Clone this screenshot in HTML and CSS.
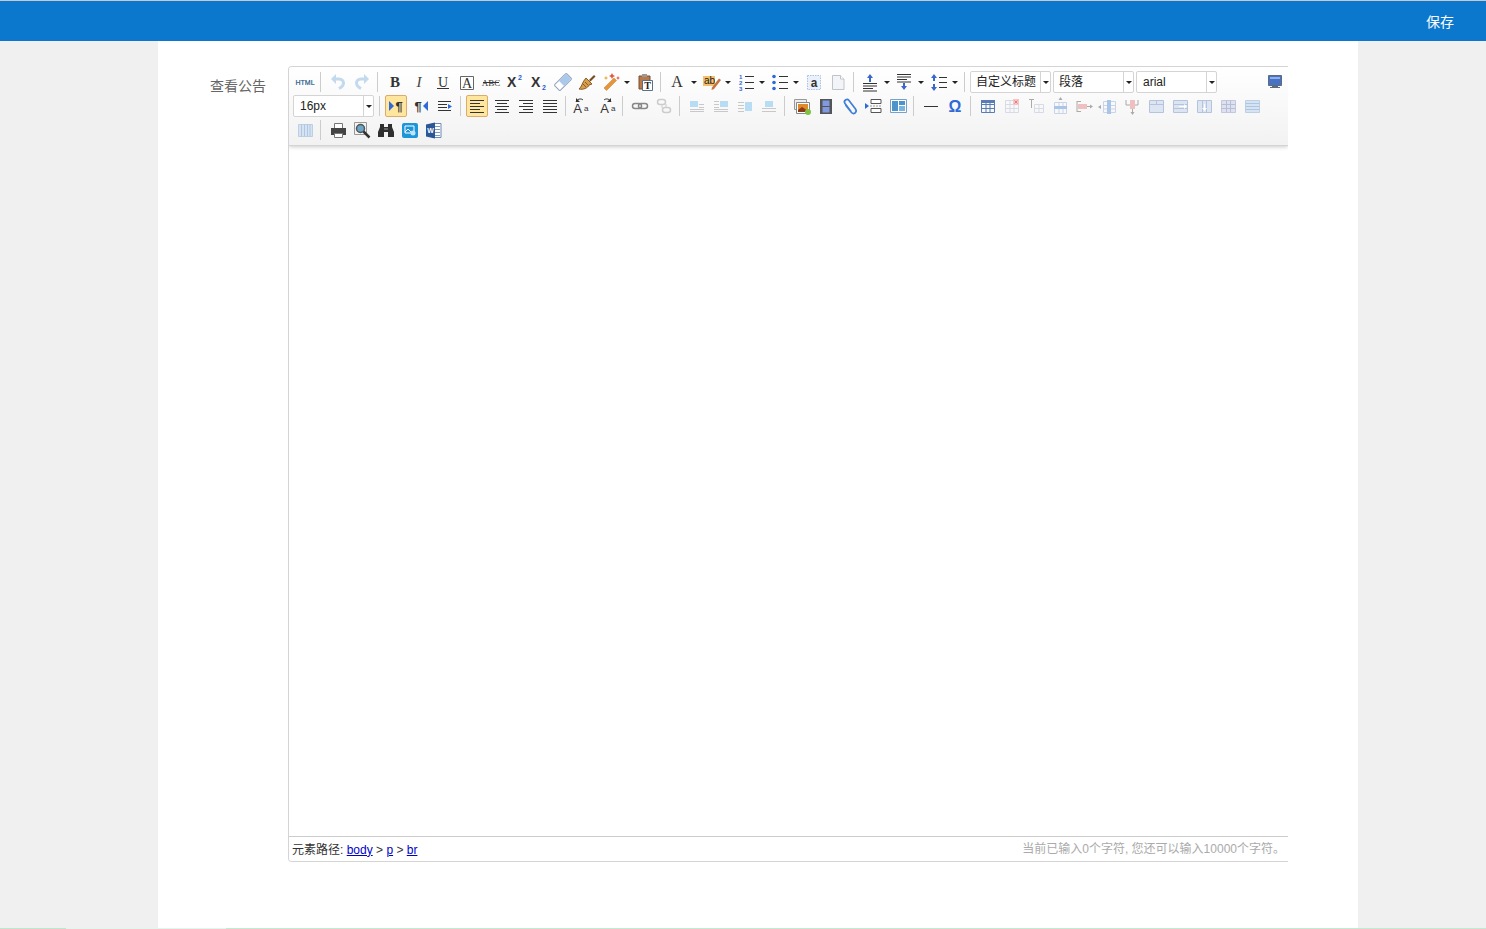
FILE: index.html
```html
<!DOCTYPE html>
<html lang="zh-CN">
<head>
  <meta charset="UTF-8" />
  <meta name="viewport" content="width=device-width, initial-scale=1" />
  <title>查看公告</title>
  <link rel="stylesheet" href="styles.css">
</head>
<body>
  <header class="topbar">
    <a class="save-link" href="#">保存</a>
  </header>

  <main class="page">
    <div class="form-row">
      <label class="form-label">查看公告</label>

      <div class="editor">
        <div class="toolbar">
          <!-- row 1 -->
          <div class="tool-row">
            <span class="btn"><svg width="20" height="20" viewBox="0 0 20 20"><text x="10" y="12.500" class="html-text">HTML</text></svg></span>
            <span class="sep"></span>
            <span class="btn"><svg width="20" height="20" viewBox="0 0 20 20"><path d="M7 7h4c3 0 4.500 2 4.500 4s-1.500 4-4.500 5.500" fill="none" stroke="#c3d9ee" stroke-width="3"/><path d="M8 2v10L3 7z" fill="#c3d9ee"/></svg></span>
            <span class="btn"><svg width="20" height="20" viewBox="0 0 20 20"><path d="M13 7H9c-3 0-4.500 2-4.500 4s1.500 4 4.500 5.500" fill="none" stroke="#c3d9ee" stroke-width="3"/><path d="M12 2v10l5-5z" fill="#c3d9ee"/></svg></span>
            <span class="sep"></span>
            <span class="btn"><svg width="20" height="20" viewBox="0 0 20 20"><text x="10" y="15" class="glyph-b">B</text></svg></span>
            <span class="btn"><svg width="20" height="20" viewBox="0 0 20 20"><text x="10" y="15" class="glyph-i">I</text></svg></span>
            <span class="btn"><svg width="20" height="20" viewBox="0 0 20 20"><text x="10" y="14.500" class="glyph-u">U</text><path d="M4 16.500h12" stroke="#333"/></svg></span>
            <span class="btn"><svg width="20" height="20" viewBox="0 0 20 20"><path d="M3.500 4.500h13v13h-13z" fill="#fff" stroke="#666"/><text x="10" y="15.500" class="glyph-u">A</text></svg></span>
            <span class="btn"><svg width="20" height="20" viewBox="0 0 20 20"><text x="10" y="14" class="abc-text">ABC</text><path d="M2 10.500h16" stroke="#333"/></svg></span>
            <span class="btn"><svg width="20" height="20" viewBox="0 0 20 20"><text x="2" y="15" class="glyph-x">X</text><text x="13" y="8" class="sup-text">2</text></svg></span>
            <span class="btn"><svg width="20" height="20" viewBox="0 0 20 20"><text x="2" y="15" class="glyph-x">X</text><text x="13" y="18" class="sup-text">2</text></svg></span>
            <span class="btn"><svg width="20" height="20" viewBox="0 0 20 20"><g transform="rotate(-45 10 10)"><rect x="1.500" y="6" width="17" height="8" rx="1" fill="#fff" stroke="#8fa3bd"/><rect x="8" y="6.500" width="10" height="7" fill="#a9c8ec"/></g></svg></span>
            <span class="btn"><svg width="20" height="20" viewBox="0 0 20 20"><path d="M12 8l5-5 1.500 1.500-5 5z" fill="#7a4a20"/><path d="M9 6l6 6-3 1c-1 3-6 5-10 4 3-2 3-7 7-11z" fill="#d79f4a" stroke="#8c5a2b"/><path d="M6 12l3 3M8 10l3 3" stroke="#8c5a2b"/></svg></span>
            <span class="btn split"><svg width="20" height="20" viewBox="0 0 20 20"><path d="M3 16L13 6l2.500 2.500-10 10z" fill="#e8953a" stroke="#c9702a" stroke-width=".5"/><path d="M11 1l1 2 2 1-2 1-1 2-1-2-2-1 2-1zM17 4l.7 1.500 1.300.5-1.300.5L17 8l-.7-1.500L15 6l1.300-.5z" fill="#e0573a"/><path d="M5 4l.7 1.300L7 6l-1.300.7L5 8l-.7-1.300L3 6l1.300-.7z" fill="#e9b13c"/></svg><i class="caret"></i></span>
            <span class="btn"><svg width="20" height="20" viewBox="0 0 20 20"><path d="M4 4h11v13H4z" fill="#b87a4b" stroke="#7a4f30"/><path d="M7 2h5v3H7z" fill="#999"/><path d="M7.500 8.500h10v10h-10z" fill="#fff" stroke="#5a6f8a"/><text x="12.500" y="17" class="paste-t">T</text></svg></span>
            <span class="sep"></span>
            <span class="btn split"><svg width="20" height="20" viewBox="0 0 20 20"><text x="9" y="14.500" class="glyph-a">A</text></svg><i class="caret"></i></span>
            <span class="btn split"><svg width="20" height="20" viewBox="0 0 20 20"><path d="M1 4h12v10H1z" fill="#f5bf6b"/><text x="2" y="12" class="ab-text">ab</text><path d="M10 15.500l7-9 2 1.500-7 9-2.500 1z" fill="#c9713c"/></svg><i class="caret"></i></span>
            <span class="btn split"><svg width="20" height="20" viewBox="0 0 20 20"><path d="M9 4.500h9M9 10.500h9M9 16.500h9" stroke="#333" stroke-width="1.200"/><text x="3" y="7" class="num-text">1</text><text x="3" y="13" class="num-text">2</text><text x="3" y="19" class="num-text">3</text></svg><i class="caret"></i></span>
            <span class="btn split"><svg width="20" height="20" viewBox="0 0 20 20"><path d="M9 4.500h9M9 10.500h9M9 16.500h9" stroke="#333" stroke-width="1.200"/><circle cx="4" cy="4.500" r="1.800" fill="#2f6ad6"/><circle cx="4" cy="10.500" r="1.800" fill="#2f6ad6"/><circle cx="4" cy="16.500" r="1.800" fill="#2f6ad6"/></svg><i class="caret"></i></span>
            <span class="btn"><svg width="20" height="20" viewBox="0 0 20 20"><path d="M3.500 3.500h13v14h-13z" fill="#eaf1fa" stroke="#a8c2e8" stroke-dasharray="1.500 1"/><text x="10" y="14.500" class="a-text">a</text></svg></span>
            <span class="btn"><svg width="20" height="20" viewBox="0 0 20 20"><path d="M4.500 3.500h8l3.500 3.500v10.500H4.500z" fill="#f2f4f8" stroke="#c0c4ca"/><path d="M12.500 3.500V7H16" fill="#fff" stroke="#c0c4ca"/></svg></span>
            <span class="sep"></span>
            <span class="btn split"><svg width="20" height="20" viewBox="0 0 20 20"><path d="M9 2l3 4h-2v4H8V6H6z" fill="#3a67c9"/><path d="M2 11.500h14M2 14h14M2 16.500h10M2 19h14" stroke="#333"/></svg><i class="caret"></i></span>
            <span class="btn split"><svg width="20" height="20" viewBox="0 0 20 20"><path d="M2 2.500h14M2 5h14M2 7.500h10M2 10h14" stroke="#333"/><path d="M9 18l3-4h-2v-3H8v3H6z" fill="#3a67c9"/></svg><i class="caret"></i></span>
            <span class="btn split"><svg width="20" height="20" viewBox="0 0 20 20"><path d="M5 2l3 4H6v3H4V6H2zM5 19l3-4H6v-3H4v3H2z" fill="#3a67c9"/><path d="M10 5.500h8M10 10.500h8M10 15.500h8" stroke="#333" stroke-width="1.200"/></svg><i class="caret"></i></span>
            <span class="sep"></span>
            <div class="select"><span class="select-value">自定义标题</span><span class="select-arrow"><i class="caret"></i></span></div>
            <div class="select"><span class="select-value">段落</span><span class="select-arrow"><i class="caret"></i></span></div>
            <div class="select latin"><span class="select-value">arial</span><span class="select-arrow"><i class="caret"></i></span></div>
            <span class="btn full"><svg width="20" height="20" viewBox="0 0 20 20"><path d="M3.500 3.500h13v10h-13z" fill="#4a72c4" stroke="#5d6b80"/><path d="M5 5h10v2H5z" fill="#8fb0e8"/><path d="M7 14h6v1h2v1H5v-1h2z" fill="#5d6b80"/></svg></span>
          </div>

          <!-- row 2 -->
          <div class="tool-row">
            <div class="select latin"><span class="select-value">16px</span><span class="select-arrow"><i class="caret"></i></span></div>
            <span class="sep"></span>
            <span class="btn"><span class="checked"><svg width="20" height="20" viewBox="0 0 20 20"><path d="M3 5l5 5-5 5z" fill="#2f6ad6"/><text x="13" y="15" class="pilcrow">¶</text></svg></span></span>
            <span class="btn"><svg width="20" height="20" viewBox="0 0 20 20"><path d="M17 5l-5 5 5 5z" fill="#2f6ad6"/><text x="7" y="15" class="pilcrow">¶</text></svg></span>
            <span class="btn"><svg width="20" height="20" viewBox="0 0 20 20"><path d="M3 5.500h13M3 8.500h9M3 11.500h9M3 14.500h13" stroke="#333"/><path d="M13 8l4 2.500-4 2.500z" fill="#2f6ad6"/></svg></span>
            <span class="sep"></span>
            <span class="btn"><span class="checked"><svg width="20" height="20" viewBox="0 0 20 20"><path d="M3 4.500h14M3 7.500h10M3 10.500h14M3 13.500h10M3 16.500h14" stroke="#333"/></svg></span></span>
            <span class="btn"><svg width="20" height="20" viewBox="0 0 20 20"><path d="M3 4.500h14M5 7.500h10M3 10.500h14M5 13.500h10M3 16.500h14" stroke="#333"/></svg></span>
            <span class="btn"><svg width="20" height="20" viewBox="0 0 20 20"><path d="M3 4.500h14M7 7.500h10M3 10.500h14M7 13.500h10M3 16.500h14" stroke="#333"/></svg></span>
            <span class="btn"><svg width="20" height="20" viewBox="0 0 20 20"><path d="M3 4.500h14M3 7.500h14M3 10.500h14M3 13.500h14M3 16.500h14" stroke="#333"/></svg></span>
            <span class="sep"></span>
            <span class="btn"><svg class="nudge" width="20" height="20" viewBox="0 0 20 20"><text x="7.500" y="17" class="case-a">A</text><text x="14" y="15" class="tiny-a">a</text><path d="M6 6c1-3 5-4 7-2" fill="none" stroke="#333"/><path d="M6 2v4h4z" fill="#333"/></svg></span>
            <span class="btn"><svg width="20" height="20" viewBox="0 0 20 20"><text x="7.500" y="17" class="case-a">A</text><text x="14" y="15" class="tiny-a">a</text><path d="M14 6c-1-3-5-4-7-2" fill="none" stroke="#333"/><path d="M14 2v4h-4z" fill="#333"/></svg></span>
            <span class="sep"></span>
            <span class="btn"><svg width="20" height="20" viewBox="0 0 20 20"><rect x="2.500" y="7.500" width="9" height="5" rx="2.500" fill="none" stroke="#888" stroke-width="1.500"/><rect x="8.500" y="7.500" width="9" height="5" rx="2.500" fill="none" stroke="#888" stroke-width="1.500"/></svg></span>
            <span class="btn"><svg width="20" height="20" viewBox="0 0 20 20"><rect x="3.500" y="3.500" width="8" height="5" rx="2.500" fill="none" stroke="#ccc" stroke-width="1.500"/><rect x="8.500" y="11.500" width="8" height="5" rx="2.500" fill="none" stroke="#ccc" stroke-width="1.500"/><path d="M8 8v4M12 8v4" stroke="#ccc"/></svg></span>
            <span class="sep"></span>
            <span class="btn"><svg width="20" height="20" viewBox="0 0 20 20"><path d="M3 5h8v6H3z" fill="#b9dcf5"/><path d="M12 8.500h5M12 11.500h5M3 13.500h14M3 15.500h14" stroke="#c8c8c8"/></svg></span>
            <span class="btn"><svg width="20" height="20" viewBox="0 0 20 20"><path d="M9 5h8v6H9z" fill="#b9dcf5"/><path d="M3 5.500h5M3 8.500h5M3 11.500h5M3 13.500h14M3 15.500h14" stroke="#c8c8c8"/></svg></span>
            <span class="btn"><svg width="20" height="20" viewBox="0 0 20 20"><path d="M10 6h7v9h-7z" fill="#b9dcf5"/><path d="M3 6.500h6M3 9.500h6M3 12.500h6M3 15.500h6" stroke="#c8c8c8"/></svg></span>
            <span class="btn"><svg width="20" height="20" viewBox="0 0 20 20"><path d="M6 5h8v6H6z" fill="#b9dcf5"/><path d="M3 12.500h14M3 15.500h14" stroke="#c8c8c8"/></svg></span>
            <span class="sep"></span>
            <span class="btn"><svg width="20" height="20" viewBox="0 0 20 20"><path d="M2.500 3.500h12v10h-12z" fill="#eee" stroke="#999"/><path d="M4.500 6.500h13v11h-13z" fill="#fff" stroke="#888"/><path d="M6 8h10v8H6z" fill="#e08a2a"/><path d="M6 14l4-3 6 4v1H6z" fill="#8a3a1a"/><circle cx="16" cy="16" r="3" fill="#7fc241"/></svg></span>
            <span class="btn"><svg width="20" height="20" viewBox="0 0 20 20"><path d="M4 3h12v15H4z" fill="#555"/><path d="M6.500 4.500h7v5.500h-7zM6.500 11h7v5.500h-7z" fill="#7f9ae0"/></svg></span>
            <span class="btn"><svg width="20" height="20" viewBox="0 0 20 20"><path d="M5.500 9l6 7.500c2.500 2.500 6-.5 4-3.500L9 4.500C7 2 3 4.500 5 7.500l6 8" fill="none" stroke="#3f7fd6" stroke-width="1.700"/></svg></span>
            <span class="btn"><svg width="20" height="20" viewBox="0 0 20 20"><path d="M7 3.500h10v4H7zM7 12.500h10v4H7z" fill="#fff" stroke="#555"/><path d="M6 10h12" stroke="#999" stroke-dasharray="2 1"/><path d="M1 7l4 3-4 3z" fill="#2f6ad6"/></svg></span>
            <span class="btn"><svg width="20" height="20" viewBox="0 0 20 20"><path d="M2.500 3.500h16v13h-16z" fill="#fff" stroke="#7aa0c4"/><path d="M4 5h6v10H4z" fill="#4d93cc"/><path d="M11 5h6v4h-6z" fill="#4d93cc"/><path d="M11 10h6v5h-6z" fill="#7ab4df"/></svg></span>
            <span class="sep"></span>
            <span class="btn"><svg width="20" height="20" viewBox="0 0 20 20"><path d="M3 10.500h14" stroke="#333"/></svg></span>
            <span class="btn"><svg width="20" height="20" viewBox="0 0 20 20"><text x="10" y="16" class="omega">Ω</text></svg></span>
            <span class="sep"></span>
            <span class="btn"><svg width="20" height="20" viewBox="0 0 20 20"><path d="M3 4h14v3H3z" fill="#5a7cb5"/><path d="M3.500 4.500h13v12h-13zM3.500 8.500h13M3.500 12.500h13M8 7v10M12 7v10" fill="none" stroke="#5a7cb5"/></svg></span>
            <span class="btn"><svg width="20" height="20" viewBox="0 0 20 20"><path d="M3.500 4.500h13v12h-13zM3.500 8.500h13M3.500 12.500h13M8 4v13M12 4v13" fill="none" stroke="#d6dbe5"/><path d="M11 3h6v6h-6z" fill="#f7c5c5"/><path d="M12.500 4.500l3 3M15.500 4.500l-3 3" stroke="#e58080"/></svg></span>
            <span class="btn"><svg width="20" height="20" viewBox="0 0 20 20"><path d="M8.500 8.500h9v8h-9zM8.500 12.500h9M13 8v9" fill="none" stroke="#d6dbe5"/><path d="M3 3.500h5M5.500 3v9" stroke="#aaa"/></svg></span>
            <span class="btn"><svg width="20" height="20" viewBox="0 0 20 20"><path d="M4.500 6.500h12v11h-12zM9 6v12M13 6v12" fill="none" stroke="#c9d4e6"/><path d="M4 10h13v3H4z" fill="#a9c6ea"/><path d="M10.500 1l2 3h-4z" fill="#aaa"/></svg></span>
            <span class="btn"><svg width="20" height="20" viewBox="0 0 20 20"><path d="M3 5.500h4M3 15.500h4M3 5v11" fill="none" stroke="#aaa"/><path d="M4 8h9v5H4z" fill="#f0c0c0"/><path d="M13 10.500h4" stroke="#aaa"/><path d="M16 8.500l3 2-3 2z" fill="#aaa"/></svg></span>
            <span class="btn"><svg width="20" height="20" viewBox="0 0 20 20"><path d="M5.500 5.500h12v11h-12zM5.500 9.500h12M5.500 13h12" fill="none" stroke="#c9d4e6"/><path d="M9 4h4v14H9z" fill="#a9c6ea"/><path d="M0 11l3-2v4z" fill="#aaa"/></svg></span>
            <span class="btn"><svg width="20" height="20" viewBox="0 0 20 20"><path d="M4 4v5h12V4" fill="none" stroke="#aaa"/><path d="M8 4h5v9H8z" fill="#f0c0c0"/><path d="M10.500 13v4" stroke="#aaa"/><path d="M8.500 16l2 3 2-3z" fill="#aaa"/></svg></span>
            <span class="btn"><svg width="20" height="20" viewBox="0 0 20 20"><path d="M3.500 4.500h14v12h-14z" fill="#dde5f2" stroke="#b5c4dc"/><path d="M3.500 8.500h14M10.500 4.500v4" stroke="#b5c4dc"/></svg></span>
            <span class="btn"><svg width="20" height="20" viewBox="0 0 20 20"><path d="M3.500 4.500h14v12h-14z" fill="#dde5f2" stroke="#b5c4dc"/><path d="M3.500 8.500h14M3.500 12.500h14" stroke="#b5c4dc"/><path d="M9 10.500h6" stroke="#fff"/><path d="M14 8l3 2.500-3 2.500z" fill="#fff"/></svg></span>
            <span class="btn"><svg width="20" height="20" viewBox="0 0 20 20"><path d="M3.500 4.500h14v12h-14z" fill="#dde5f2" stroke="#b5c4dc"/><path d="M8.500 4.500v12M12.500 4.500v12" stroke="#b5c4dc"/><path d="M10.500 8v5" stroke="#fff"/><path d="M8 12l2.500 3 2.500-3z" fill="#fff"/></svg></span>
            <span class="btn"><svg width="20" height="20" viewBox="0 0 20 20"><path d="M3.500 4.500h14v12h-14z" fill="#dde1f0" stroke="#c3c8dc"/><path d="M3.500 8.500h14M3.500 12.500h14M8.500 4.500v12M12.500 4.500v12" stroke="#b9bed6"/></svg></span>
            <span class="btn"><svg width="20" height="20" viewBox="0 0 20 20"><path d="M3.500 4.500h14v12h-14z" fill="#d5e3f3" stroke="#bccfe4"/><path d="M3.500 7.500h14M3.500 10.500h14M3.500 13.500h14" stroke="#aec6e0"/></svg></span>
          </div>

          <!-- row 3 -->
          <div class="tool-row">
            <span class="btn"><svg width="20" height="20" viewBox="0 0 20 20"><path d="M3.500 4.500h14v12h-14z" fill="#d5e3f3" stroke="#bccfe4"/><path d="M6.500 4.500v12M9.500 4.500v12M12.500 4.500v12M15 4.500v12" stroke="#aec6e0"/></svg></span>
            <span class="sep"></span>
            <span class="btn"><svg width="20" height="20" viewBox="0 0 20 20"><path d="M6.500 3.500h8v5h-8z" fill="#fff" stroke="#777"/><path d="M3 8h15v7H3z" fill="#444"/><path d="M6.500 13.500h8v4h-8z" fill="#fff" stroke="#777"/></svg></span>
            <span class="btn"><svg width="20" height="20" viewBox="0 0 20 20"><path d="M2.500 2.500h12v12h-12z" fill="#f4f4f4" stroke="#999"/><circle cx="8.500" cy="8.500" r="4" fill="#6aa7c9" stroke="#555" stroke-width="1.500"/><path d="M11.500 11.500l6 6" stroke="#333" stroke-width="2.500"/></svg></span>
            <span class="btn"><svg width="20" height="20" viewBox="0 0 20 20"><path d="M4 4h4v3h4V4h4v3l2 5v5h-6v-5H8v5H2v-5l2-5z" fill="#2f2f2f"/><path d="M8 8h4v2H8z" fill="#666"/></svg></span>
            <span class="btn"><svg width="20" height="20" viewBox="0 0 20 20"><rect x="2" y="3" width="16" height="15" rx="2" fill="#1d95d9"/><path d="M5 6h9v7H5z" fill="none" stroke="#fff"/><circle cx="13" cy="13" r="2.500" fill="#bfe4f8"/><path d="M5 12l3-3 3 3" fill="none" stroke="#fff"/></svg></span>
            <span class="btn"><svg width="20" height="20" viewBox="0 0 20 20"><path d="M8 3.500h9v14H8z" fill="#fff" stroke="#6f8ab5"/><path d="M10 6.500h6M10 9.500h6M10 12.500h6M10 15.500h6" stroke="#7f9ac4"/><path d="M2 4.500l9-2v16l-9-2z" fill="#2b5797"/><text x="6.500" y="13" class="word-w">W</text></svg></span>
          </div>
        </div>

        <div class="edit-area"></div>

        <div class="statusbar">
          <div class="path">元素路径: <a href="#">body</a> &gt; <a href="#">p</a> &gt; <a href="#">br</a></div>
          <div class="count">当前已输入0个字符, 您还可以输入10000个字符。</div>
        </div>
      </div>
    </div>
  </main>

  <div class="progress-line"></div>
</body>
</html>
```

FILE: styles.css
```css
* {
  box-sizing: border-box;
}

html, body {
  height: 100%;
}

body {
  margin: 0;
  background: #f0f0f0;
  font-family: "Liberation Sans", "Noto Sans CJK SC", sans-serif;
  font-size: 12px;
  color: #333;
  overflow: hidden;
  display: flex;
  flex-direction: column;
}

.topbar {
  height: 41px;
  flex-shrink: 0;
  background: #0b78cd;
  border-top: 1px solid #c9c9c9;
  display: flex;
  justify-content: flex-end;
  align-items: center;
  padding-right: 32px;
}

.save-link {
  color: #fff;
  font-size: 14px;
  text-decoration: none;
}

.page {
  width: 1200px;
  margin-left: 158px;
  flex: 1;
  background: #fff;
  padding-top: 25px;
}

.form-row {
  display: flex;
  align-items: flex-start;
}

.form-label {
  width: 108px;
  margin-top: 10px;
  text-align: right;
  font-size: 14px;
  line-height: 20px;
  color: #666;
}

.editor {
  width: 1000px;
  margin-left: 22px;
  border: 1px solid #d4d4d4;
  border-right: 0;
  border-radius: 4px 0 0 4px;
  overflow: hidden;
}

/* toolbar */
.toolbar {
  height: 79px;
  padding: 3px 0 0 4px;
  background: linear-gradient(to bottom, #fff, #f2f2f2);
  border-bottom: 1px solid #d4d4d4;
  box-shadow: 0 1px 4px #ccc;
  position: relative;
}

.tool-row {
  display: flex;
  height: 24px;
  align-items: center;
}

.btn {
  flex: none;
  width: 24px;
  height: 24px;
  display: flex;
  align-items: center;
  justify-content: center;
  position: relative;
}

.btn.split {
  width: 34px;
  justify-content: flex-start;
  padding-left: 2px;
}

.btn.split .caret {
  margin-left: 3px;
}

.btn.full {
  margin-left: 44px;
}

.caret {
  display: block;
  width: 0;
  height: 0;
  border-left: 3px solid transparent;
  border-right: 3px solid transparent;
  border-top: 3px solid #222;
}

.sep {
  flex: none;
  width: 9px;
  height: 20px;
  position: relative;
}

.sep::before {
  content: "";
  position: absolute;
  left: 3px;
  top: 0;
  width: 1px;
  height: 20px;
  background: #ccc;
}

.btn:has(.checked) {
  justify-content: flex-start;
}

.checked {
  width: 22px;
  height: 22px;
  flex: none;
  display: flex;
  align-items: center;
  justify-content: center;
  background: #ffe69f;
  border: 1px solid #dcac6c;
  border-radius: 2px;
}

.nudge {
  margin-left: -6px;
}

.select {
  flex: none;
  width: 81px;
  height: 22px;
  margin-right: 2px;
  display: flex;
  background: #fff;
  border: 1px solid #d4d4d4;
  border-radius: 2px;
  line-height: 20px;
  color: #222;
}

.select-value {
  flex: 1;
  padding-left: 5px;
  overflow: hidden;
  white-space: nowrap;
}

.select.latin .select-value {
  padding-left: 6px;
}

.select-arrow {
  width: 10px;
  border-left: 1px solid #d4d4d4;
  display: flex;
  align-items: center;
  justify-content: center;
}

/* svg text glyphs */
.html-text {
  font: 7px "Liberation Sans", sans-serif;
  stroke: #2a5a8c;
  stroke-width: .2;
  fill: #2a5a8c;
  text-anchor: middle;
}

.glyph-b {
  font: bold 15px "Liberation Serif", serif;
  fill: #333;
  text-anchor: middle;
}

.glyph-i {
  font: italic 15px "Liberation Serif", serif;
  fill: #444;
  text-anchor: middle;
}

.glyph-u {
  font: 14px "Liberation Serif", serif;
  fill: #333;
  text-anchor: middle;
}

.glyph-a {
  font: 16px "Liberation Serif", serif;
  fill: #333;
  text-anchor: middle;
}

.glyph-x {
  font: bold 14px "Liberation Sans", sans-serif;
  fill: #333;
}

.sup-text {
  font: bold 7px "Liberation Sans", sans-serif;
  fill: #2a5fc9;
}

.abc-text {
  font: 9px "Liberation Serif", serif;
  fill: #333;
  text-anchor: middle;
}

.paste-t {
  font: bold 10px "Liberation Serif", serif;
  fill: #222;
  text-anchor: middle;
}

.ab-text {
  font: 10px "Liberation Sans", sans-serif;
  fill: #222;
}

.num-text {
  font: bold 6px "Liberation Sans", sans-serif;
  fill: #2f6ad6;
}

.a-text {
  font: bold 12px "Liberation Mono", monospace;
  fill: #333;
  text-anchor: middle;
}

.pilcrow {
  font: bold 13px "Liberation Sans", sans-serif;
  fill: #333;
  text-anchor: middle;
}

.case-a {
  font: 13px "Liberation Sans", sans-serif;
  fill: #333;
  text-anchor: middle;
}

.tiny-a {
  font: 8px "Liberation Sans", sans-serif;
  fill: #333;
}

.omega {
  font: bold 16px "Liberation Sans", sans-serif;
  fill: #2f6ad6;
  text-anchor: middle;
}

.word-w {
  font: bold 7px "Liberation Sans", sans-serif;
  fill: #fff;
  text-anchor: middle;
}

.edit-area {
  height: 690px;
  background: #fff;
}

.statusbar {
  height: 25px;
  border-top: 1px solid #ccc;
  display: flex;
  justify-content: space-between;
  align-items: center;
  padding: 0 3px 0 3px;
  background: #fff;
}

.path {
  color: #333;
  margin-top: -2px;
}

.path a {
  color: #00c;
}

.count {
  color: #aaa;
  margin-top: -4px;
}

.progress-line {
  position: fixed;
  left: 0;
  right: 0;
  bottom: 0;
  height: 1px;
  background: linear-gradient(to right, #bfe5cc 66px, #e4f5ee 66px, #e4f5ee 226px, #c5e8d0 226px);
}
```
